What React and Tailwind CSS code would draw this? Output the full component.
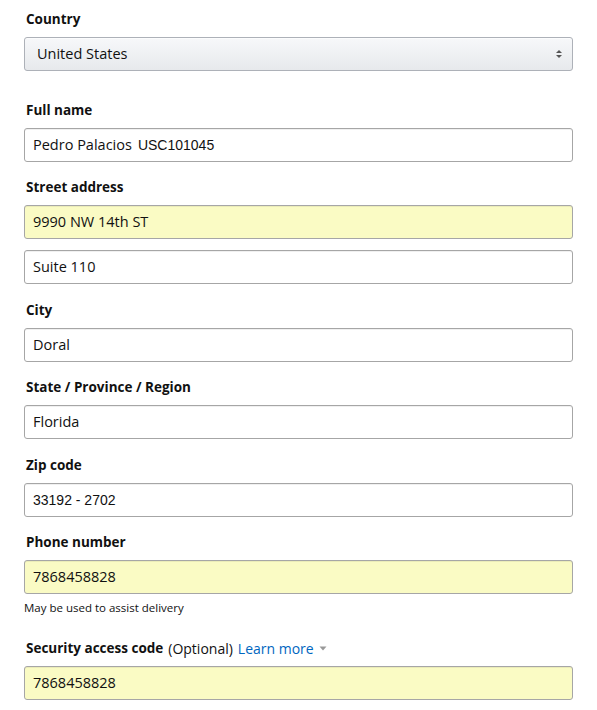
const font = { fontFamily: '"Open Sans", "Noto Sans", sans-serif' };
const arial = { fontFamily: '"Liberation Sans", Arial, sans-serif' };

function Label({ children, className = '' }) {
  return (
    <div className={`h-[19px] mb-2 pl-[2px] text-[13.5px] leading-[19px] font-bold text-[#111] ${className}`}>
      {children}
    </div>
  );
}

function Field({ value, filled, className = '' }) {
  return (
    <div
      className={`h-[34px] rounded-[3px] border border-[#a6a6a6] shadow-[inset_0_1px_0_rgba(0,0,0,0.06)] flex items-center pl-[8px] text-[14.5px] text-[#111] ${
        filled ? 'bg-[#fafbc4]' : 'bg-white'
      } ${className}`}
    >
      {value}
    </div>
  );
}

export default function App() {
  return (
    <div className="min-h-screen bg-white pt-[10px] pl-[24px] pr-[24px]" style={font}>
      {/* Country */}
      <Label>Country</Label>
      <div className="h-[34px] rounded-[3px] border border-[#adb1b8] bg-gradient-to-b from-[#f7f8fa] to-[#e7e9ec] flex items-center justify-between pl-[12px] pr-[8px] text-[14.5px] text-[#111] shadow-[0_1px_0_rgba(255,255,255,0.6)_inset]">
        <span>United States</span>
        <svg width="8" height="10" viewBox="0 0 8 10" className="mr-[1px]">
          <path d="M4 1 L7 4 H1 Z" fill="#555" />
          <path d="M4 9 L7 6 H1 Z" fill="#555" />
        </svg>
      </div>

      <Label className="mt-[30px]">Full name</Label>
      <Field
        value={
          <span>
            Pedro Palacios
            <span className="ml-[6px] text-[14px]" style={arial}>USC101045</span>
          </span>
        }
      />

      <Label className="mt-[16px]">Street address</Label>
      <Field value="9990 NW 14th ST" filled />
      <Field value="Suite 110" className="mt-[11px]" />

      <Label className="mt-[17px]">City</Label>
      <Field value="Doral" />

      <Label className="mt-[16px]">State / Province / Region</Label>
      <Field value="Florida" />

      <Label className="mt-[17px]">Zip code</Label>
      <Field value={<span className="text-[14px]" style={arial}>33192 - 2702</span>} />

      <Label className="mt-[16px]">Phone number</Label>
      <Field value="7868458828" filled />
      <div className="mt-[6px] text-[11.5px] leading-[16px] text-[#111]">May be used to assist delivery</div>

      <div className="mt-[23px] h-[19px] mb-2 pl-[2px] text-[13.5px] leading-[19px] text-[#111] flex items-center">
        <span className="font-bold">Security access code</span>
        <span className="ml-[5px] text-[14px]">(Optional)</span>
        <span className="ml-[5px] text-[14px] text-[#0066c0]">Learn more</span>
        <svg width="8" height="5" viewBox="0 0 8 5" className="ml-[5px]">
          <path d="M0.5 0.5 H7.5 L4 4.5 Z" fill="#999" />
        </svg>
      </div>
      <Field value="7868458828" filled />
    </div>
  );
}
